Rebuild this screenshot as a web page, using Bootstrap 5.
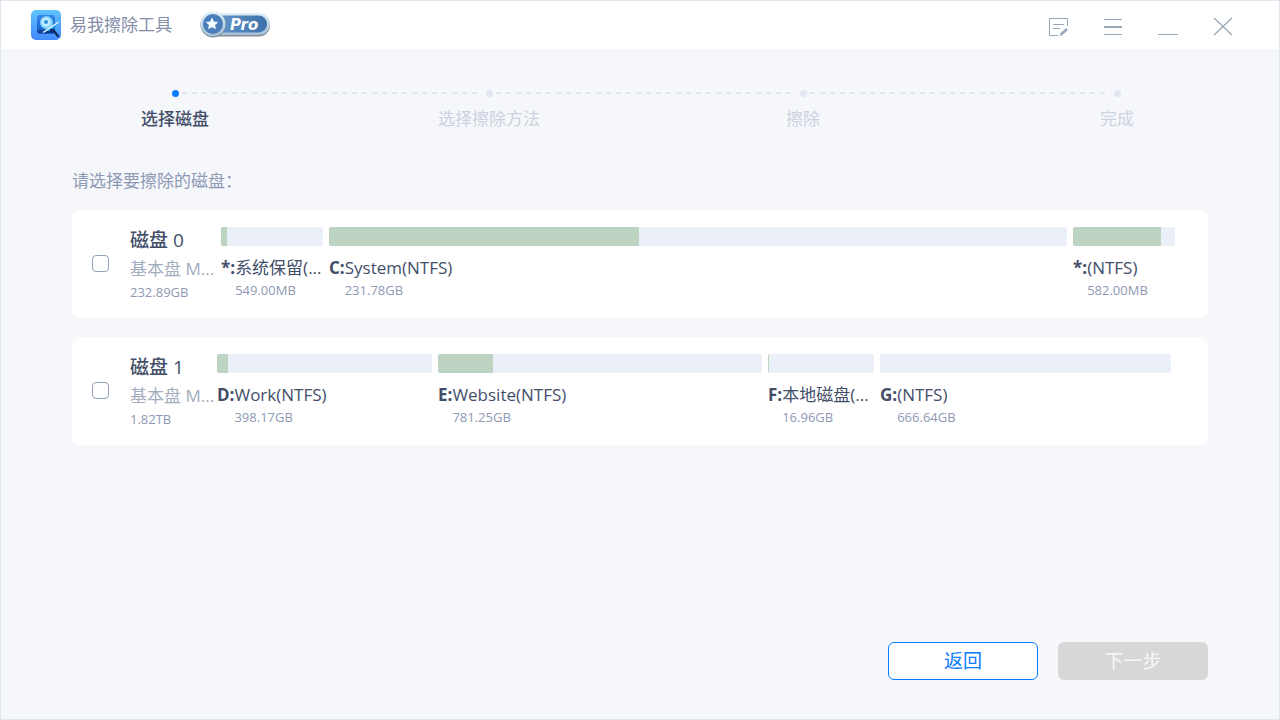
<!DOCTYPE html>
<html lang="zh-CN">
<head>
<meta charset="utf-8">
<meta name="viewport" content="width=device-width, initial-scale=1">
<title>易我擦除工具</title>
<link href="https://cdn.jsdelivr.net/npm/bootstrap@5.3.0/dist/css/bootstrap.min.css" rel="stylesheet">
<style>
  :root { --ink: #434e69; --soft: #8e99b3; --line: #dfe6f0; --track: #ebeff8; --used: #bcd4c1; --accent: #0a7cff; }
  body { background: #f5f7fb; color: var(--ink); font-family: "Open Sans", "Noto Sans CJK SC", sans-serif; font-size: 17px; line-height: 24px; }
  .window { border: 1px solid var(--line); }
  .titlebar { height: 48px; background: #fff; padding: 0 45px 0 30px; }
  .app-name { color: #838da8; margin-left: 9px; font-size: 17px; line-height: 24px; font-weight: 400; }
  .pro-mark { margin-left: 27px; }
  .tool-button { width: 22px; height: 22px; color: #98a7b8; }
  .tool-list { gap: 33px; padding-top: 3px; }

  .steps { padding: 41px 5px 0 17px; }
  .step { flex: 1 1 0; color: #ccd2de; position: relative; }
  .step::before { content: ""; display: block; width: 7px; height: 7px; margin: 0 auto 10px; border-radius: 50%; background: #e1e6f1; }
  .step + .step::after { content: ""; position: absolute; top: 2px; left: calc(-50% + 7px); right: calc(50% + 7px); height: 2px;
    background: repeating-linear-gradient(90deg, #e1e6f1 0 5px, transparent 5px 10px); }
  .step.current { color: var(--ink); font-weight: 500; }
  .step.current::before { background: var(--accent); }

  .content { padding: 38px 71px 39px; }
  .prompt { color: var(--soft); margin-bottom: 17px; }
  .disk { background: #fff; border-radius: 8px; padding: 15px 33px 16px 20px; }
  .disk + .disk { margin-top: 19px; }
  .disk .form-check-input { width: 17px; height: 17px; margin: 0 21px 0 0; border: 1px solid #93a1b8; border-radius: 4px; flex: none; }
  .disk-info { width: 87px; flex: none; white-space: nowrap; }
  .disk-name { font-size: 19px; line-height: 30px; font-weight: 500; }
  .disk-kind { color: #a3acbe; line-height: 28px; }
  .disk-size { color: var(--soft); font-size: 13px; line-height: 19px; }
  .volumes { gap: 6px; margin-top: 2px; }
  .volume { flex-basis: 0; min-width: 0; }
  .usage { height: 19px; background: var(--track); border-radius: 2px; overflow: hidden; margin-bottom: 10px; }
  .usage-fill { height: 100%; background: var(--used); }
  .volume-text { display: grid; grid-template-columns: auto 1fr; white-space: nowrap; }
  .volume-size { grid-column: 2; color: var(--soft); font-size: 13px; line-height: 20px; }

  .actions { gap: 20px; }
  .action { width: 150px; height: 38px; border-radius: 6px; font-size: 19px; line-height: 24px; padding: 0; }
  .action-back, .action-back:hover { background: #fff; border: 1px solid var(--accent); color: var(--accent); }
  .action-next:disabled { background: #d7d7d7; border: 0; color: #f7f7f7; opacity: 1; }
</style>
</head>
<body>
<div class="window min-vh-100 d-flex flex-column">
  <header class="titlebar d-flex align-items-center">
    <svg width="30" height="30" viewBox="0 0 30 30" aria-hidden="true">
      <defs>
        <linearGradient id="tile" x1="0" y1="0" x2="0" y2="1"><stop offset="0" stop-color="#5fc3fd"/><stop offset="1" stop-color="#4289fb"/></linearGradient>
        <linearGradient id="drive" x1="0" y1="0" x2="0" y2="1"><stop offset="0" stop-color="#3287e9"/><stop offset="1" stop-color="#1456c9"/></linearGradient>
      </defs>
      <rect width="30" height="30" rx="5" fill="url(#tile)"/>
      <rect x="6" y="5" width="18" height="19" rx="3" fill="url(#drive)"/>
      <path d="M6 20h15l3 3H7z" fill="#174596"/>
      <circle cx="15.500" cy="12.500" r="6.500" fill="#82d5fb"/>
      <circle cx="15" cy="12" r="4.500" fill="#c0edff"/>
      <circle cx="15" cy="12" r="2" fill="#328fdd"/>
      <path d="M12 22c4-1 9-5 13-9l3-2c-3 6-9 11-16 11z" fill="#34b6ef"/>
      <path d="M12 22.500 27.500 12" stroke="#e4f5ff" stroke-width="1.500"/>
      <path d="M22 20l5 6" stroke="#102c5c" stroke-width="2.400" stroke-linecap="round"/>
      <path d="M17 21v2m3-4v4" stroke="#092d7b" stroke-width="2"/>
    </svg>
    <h1 class="app-name mb-0">易我擦除工具</h1>
    <svg class="pro-mark" width="72" height="28" viewBox="0 0 72 28" role="img" aria-label="Pro">
      <defs>
        <linearGradient id="pill" x1="0" y1="0" x2="1" y2="0"><stop offset="0" stop-color="#6b9dcd"/><stop offset="1" stop-color="#3d70ac"/></linearGradient>
        <linearGradient id="rim" x1="0" y1="0" x2="0" y2="1"><stop offset="0" stop-color="#e1eef7"/><stop offset="1" stop-color="#a4bfd6"/></linearGradient>
      </defs>
      <rect x="6" y="3.500" width="65" height="22" rx="11" fill="#858f99"/>
      <rect x="6" y="2" width="65" height="22" rx="11" fill="url(#rim)"/>
      <rect x="9" y="4.500" width="59" height="17" rx="8.500" fill="url(#pill)"/>
      <circle cx="14" cy="14" r="12.500" fill="#78858f"/>
      <circle cx="14" cy="13" r="12.500" fill="url(#rim)"/>
      <circle cx="14" cy="13" r="10" fill="#4a7ebb"/>
      <path d="M13 6.500l1.900 3.900 4.400.6-3.200 3 .8 4.300-3.900-2.100-3.900 2.100.8-4.300-3.200-3 4.400-.6z" fill="#f3f8fc"/>
      <text x="31" y="18.500" font-family="DejaVu Sans, sans-serif" font-size="15" font-weight="700" font-style="italic" fill="#fff">Pro</text>
    </svg>
    <div class="tool-list d-flex ms-auto">
      <button type="button" class="tool-button btn border-0 p-0 d-flex" aria-label="反馈">
        <svg width="22" height="22" viewBox="0 0 22 22" fill="none" stroke="currentColor" aria-hidden="true"><path d="M20.500 10V2.500h-18v17h9M6 8.500h11M6 12.500h7"/><path d="M13.500 19l6.500-6" stroke-width="2.500"/></svg>
      </button>
      <button type="button" class="tool-button btn border-0 p-0 d-flex" aria-label="菜单">
        <svg width="22" height="22" viewBox="0 0 22 22" stroke="currentColor" aria-hidden="true"><path d="M2 3.500h18M2 18.500h18"/><path d="M2 11h18" stroke-width="2"/></svg>
      </button>
      <button type="button" class="tool-button btn border-0 p-0 d-flex" aria-label="最小化">
        <svg width="22" height="22" viewBox="0 0 22 22" stroke="currentColor" aria-hidden="true"><path d="M1 18.500h20"/></svg>
      </button>
      <button type="button" class="tool-button btn border-0 p-0 d-flex" aria-label="关闭">
        <svg width="22" height="22" viewBox="0 0 22 22" stroke="currentColor" stroke-width="1.300" aria-hidden="true"><path d="M2 2l18 17M20 2L2 19"/></svg>
      </button>
    </div>
  </header>

  <ol class="steps list-unstyled d-flex mb-0 text-center">
    <li class="step current" aria-current="step">选择磁盘</li>
    <li class="step">选择擦除方法</li>
    <li class="step">擦除</li>
    <li class="step">完成</li>
  </ol>

  <main class="content flex-grow-1 d-flex flex-column">
    <p class="prompt">请选择要擦除的磁盘：</p>

    <section class="disk d-flex align-items-center">
      <input class="form-check-input" type="checkbox" id="disk0">
      <label class="disk-info" for="disk0">
        <span class="disk-name d-block">磁盘 0</span>
        <span class="disk-kind d-block">基本盘 M...</span>
        <span class="disk-size d-block">232.89GB</span>
      </label>
      <div class="volumes d-flex flex-fill align-self-start ms-1">
        <div class="volume" style="flex-grow:102">
          <div class="usage"><div class="usage-fill" style="width:6%"></div></div>
          <div class="volume-text"><b>*:</b><span>系统保留(...</span><span class="volume-size">549.00MB</span></div>
        </div>
        <div class="volume" style="flex-grow:738">
          <div class="usage"><div class="usage-fill" style="width:42%"></div></div>
          <div class="volume-text"><b>C:</b><span>System(NTFS)</span><span class="volume-size">231.78GB</span></div>
        </div>
        <div class="volume" style="flex-grow:102">
          <div class="usage"><div class="usage-fill" style="width:86%"></div></div>
          <div class="volume-text"><b>*:</b><span>(NTFS)</span><span class="volume-size">582.00MB</span></div>
        </div>
      </div>
    </section>

    <section class="disk d-flex align-items-center">
      <input class="form-check-input" type="checkbox" id="disk1">
      <label class="disk-info" for="disk1">
        <span class="disk-name d-block">磁盘 1</span>
        <span class="disk-kind d-block">基本盘 M...</span>
        <span class="disk-size d-block">1.82TB</span>
      </label>
      <div class="volumes d-flex flex-fill align-self-start me-1">
        <div class="volume" style="flex-grow:215">
          <div class="usage"><div class="usage-fill" style="width:5%"></div></div>
          <div class="volume-text"><b>D:</b><span>Work(NTFS)</span><span class="volume-size">398.17GB</span></div>
        </div>
        <div class="volume" style="flex-grow:324">
          <div class="usage"><div class="usage-fill" style="width:17%"></div></div>
          <div class="volume-text"><b>E:</b><span>Website(NTFS)</span><span class="volume-size">781.25GB</span></div>
        </div>
        <div class="volume" style="flex-grow:106">
          <div class="usage"><div class="usage-fill" style="width:1%"></div></div>
          <div class="volume-text"><b>F:</b><span>本地磁盘(...</span><span class="volume-size">16.96GB</span></div>
        </div>
        <div class="volume" style="flex-grow:291">
          <div class="usage"></div>
          <div class="volume-text"><b>G:</b><span>(NTFS)</span><span class="volume-size">666.64GB</span></div>
        </div>
      </div>
    </section>

    <div class="actions d-flex justify-content-end mt-auto pt-4">
      <button type="button" class="btn action action-back">返回</button>
      <button type="button" class="btn action action-next" disabled>下一步</button>
    </div>
  </main>
</div>
<script src="https://cdn.jsdelivr.net/npm/bootstrap@5.3.0/dist/js/bootstrap.bundle.min.js"></script>
</body>
</html>
